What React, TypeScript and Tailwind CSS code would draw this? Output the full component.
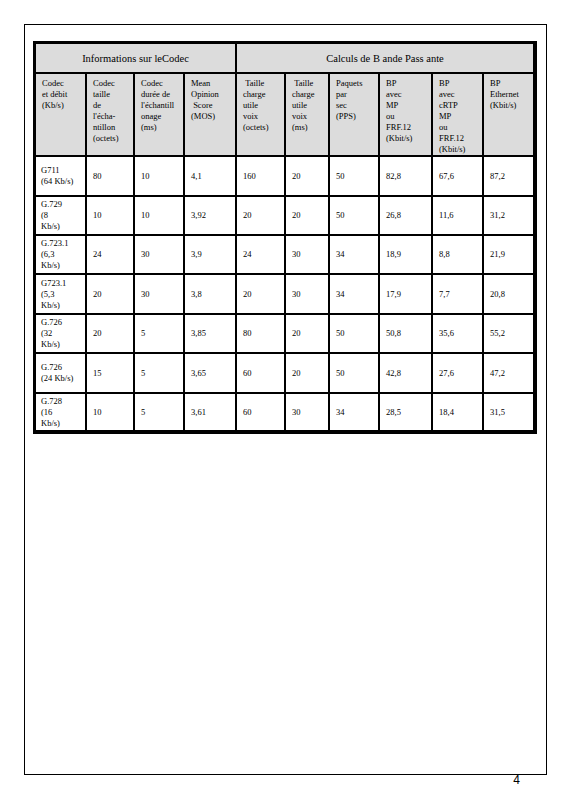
import React from "react";

const headers: string[][] = [
  ["Codec", "et débit", "(Kb/s)"],
  ["Codec", "taille", "de", "l'écha-", "ntillon", "(octets)"],
  ["Codec", "durée de", "l'échantill", "onage", "(ms)"],
  ["Mean", "Opinion", "\u00a0Score", "(MOS)"],
  ["\u00a0Taille", "charge", "utile", "voix", "(octets)"],
  ["\u00a0Taille", "charge", "utile", "voix", "(ms)"],
  ["Paquets", "par", "sec", "(PPS)"],
  ["BP", "avec", "MP", "ou", "FRF.12", "(Kbit/s)"],
  ["BP", "avec", "cRTP", "MP", "ou", "FRF.12", "(Kbit/s)"],
  ["BP", "Ethernet", "(Kbit/s)"],
];

const rows: { codec: string[]; vals: string[] }[] = [
  { codec: ["G711", "(64 Kb/s)"], vals: ["80", "10", "4,1", "160", "20", "50", "82,8", "67,6", "87,2"] },
  { codec: ["G.729", "(8", "Kb/s)"], vals: ["10", "10", "3,92", "20", "20", "50", "26,8", "11,6", "31,2"] },
  { codec: ["G.723.1", "(6,3", "Kb/s)"], vals: ["24", "30", "3,9", "24", "30", "34", "18,9", "8,8", "21,9"] },
  { codec: ["G723.1", "(5,3", "Kb/s)"], vals: ["20", "30", "3,8", "20", "30", "34", "17,9", "7,7", "20,8"] },
  { codec: ["G.726", "(32", "Kb/s)"], vals: ["20", "5", "3,85", "80", "20", "50", "50,8", "35,6", "55,2"] },
  { codec: ["G.726", "(24 Kb/s)"], vals: ["15", "5", "3,65", "60", "20", "50", "42,8", "27,6", "47,2"] },
  { codec: ["G.728", "(16", "Kb/s)"], vals: ["10", "5", "3,61", "60", "30", "34", "28,5", "18,4", "31,5"] },
];

export default function App() {
  return (
    <div className="w-[570px] h-[810px] bg-white" style={{ fontFamily: '"Liberation Serif", "Times New Roman", serif' }}>
      <div className="pt-[24px] pl-[24px]">
        <div className="w-[523px] h-[751px] border border-black pt-[16px] pl-[8px]">
          <div className="w-[504px] bg-black border-t-[3px] border-l-[3px] border-r-[4px] border-b-[4px] border-black text-black">
            <div className="grid grid-cols-[49px_46px_48px_50px_47px_42px_48px_51px_49px_49px] grid-rows-[28px_81px_38px_37px_37px_38px_37px_38px_36px] gap-[2px]">
              <div className="col-span-4 bg-[#dcdcdc] flex items-center justify-center text-[10.5px] leading-[12px] pt-[2px]">
                Informations sur leCodec
              </div>
              <div className="col-span-6 bg-[#dcdcdc] flex items-center justify-center text-[10.5px] leading-[12px] pt-[2px]">
                Calculs de B ande Pass ante
              </div>
              {headers.map((h, i) => (
                <div key={"h" + i} className="bg-[#dcdcdc] pt-[4px] pl-[6px] text-[8.5px] leading-[11px] whitespace-nowrap overflow-hidden">
                  {h.map((l, j) => (
                    <div key={j}>{l}</div>
                  ))}
                </div>
              ))}
              {rows.map((r, i) => (
                <React.Fragment key={"r" + i}>
                  <div className="bg-white flex flex-col justify-center pl-[5px] text-[8.5px] leading-[11px] whitespace-nowrap">
                    {r.codec.map((l, j) => (
                      <div key={j}>{l}</div>
                    ))}
                  </div>
                  {r.vals.map((v, j) => (
                    <div key={j} className="bg-white flex items-center pl-[6px] text-[8.5px] leading-[11px]">
                      {v}
                    </div>
                  ))}
                </React.Fragment>
              ))}
            </div>
          </div>
        </div>
        <div className="w-[523px] flex justify-end pr-[27px] -mt-[1px]">
          <span className="text-[12px] leading-[12px]" style={{ fontFamily: '"Liberation Sans", Arial, sans-serif' }}>
            4
          </span>
        </div>
      </div>
    </div>
  );
}
